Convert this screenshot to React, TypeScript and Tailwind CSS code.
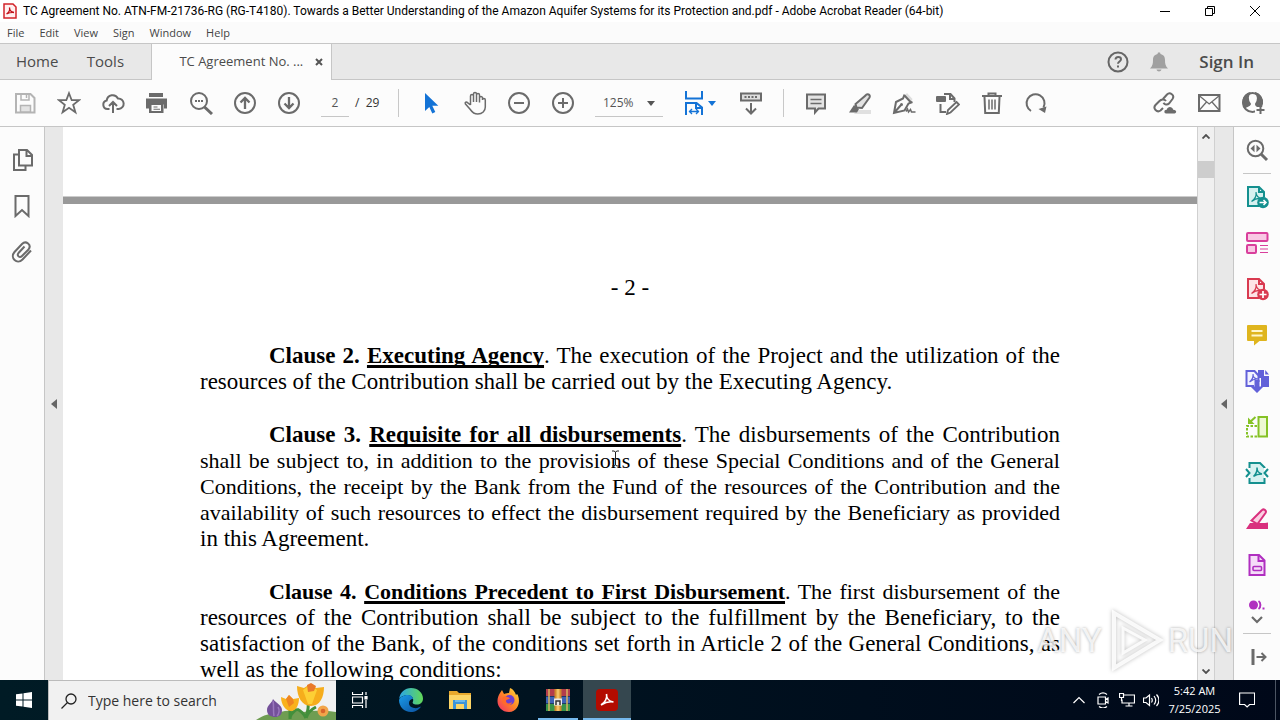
import type { ReactNode } from 'react';

type IconProps = { children: ReactNode; className?: string };

function Icon({ children, className = 'size-6' }: IconProps) {
  return (
    <svg
      viewBox="0 0 24 24"
      className={`shrink-0 ${className}`}
      fill="none"
      stroke="currentColor"
      strokeWidth="2"
      aria-hidden="true"
    >
      {children}
    </svg>
  );
}

function ToolButton({ label, children, className = 'w-11' }: { label: string; children: ReactNode; className?: string }) {
  return (
    <button type="button" aria-label={label} className={`flex h-10 shrink-0 items-center justify-center ${className}`}>
      {children}
    </button>
  );
}

const trefoil = 'M11 7c.6 4-1.600 7.500-4.500 9.500M11 7c0 3.500 2.500 6 6 6.500-4-.5-7.500.5-10.500 3';

const viewTools = [
  {
    label: 'Save',
    icon: (
      <g stroke="#b4b4b4">
        <path d="M3 3h14.500l4 4v14.500H3z" />
        <path d="M8 3v6h8V3M13.500 4v3" strokeWidth="1.500" />
        <path d="M7.500 21v-6.500h10V21z" strokeWidth="1.500" fill="#e3e3e3" />
      </g>
    ),
  },
  { label: 'Star', icon: <path d="M12 2.200l2.700 7h7.300l-5.800 4.600 2.200 7.400-6.400-4.400-6.400 4.400 2.200-7.400L2 9.200h7.300z" strokeWidth="1.800" /> },
  {
    label: 'Upload',
    icon: <path d="M8.500 18H6.500a4.300 4.300 0 01-.8-8.500A6 6 0 0117 7.500a5.200 5.200 0 01.8 10.500h-2.300M12 22V11.500M8 15l4-4 4 4" />,
  },
  {
    label: 'Print',
    icon: (
      <g stroke="none" fill="currentColor">
        <path d="M4 2h14v4H4zM1 7.500h21v10h-3v-4H4v4H1z" />
        <path d="M4 12.500h14.500v9.500H4z" />
        <path d="M6.500 14h9.500v6H6.500z" fill="#fcfcfc" />
        <path d="M8.500 15.500h4v1h-4zM8.500 17.700h6.500v1H8.500z" />
      </g>
    ),
  },
  {
    label: 'Find text',
    icon: (
      <>
        <circle cx="10" cy="10" r="8" />
        <path d="M15.500 16l7.500 7" strokeWidth="3" />
        <path d="M6 10h2M9 10h2M12 10h2" />
      </>
    ),
  },
  { label: 'Previous page', icon: <><circle cx="12" cy="12" r="10" /><path d="M12 18V7M7.500 11.500L12 7l4.500 4.500" strokeWidth="2.300" /></> },
  { label: 'Next page', icon: <><circle cx="12" cy="12" r="10" /><path d="M12 6v11M7.500 12.500L12 17l4.500-4.500" strokeWidth="2.300" /></> },
];

const pointerTools = [
  { label: 'Select', icon: <path d="M6 2v18l4.300-4 3 6.500 3-1.500-3-6.300h6z" fill="#1473d6" stroke="none" /> },
  {
    label: 'Pan',
    icon: (
      <path
        d="M7.500 14V5a1.500 1.500 0 013 0v6M10.500 5V3a1.500 1.500 0 013 0v8M13.500 4a1.500 1.500 0 013 0v7.500M16.500 6.500a1.600 1.600 0 013 0V9a1.300 1.300 0 012.800 0v7c0 4-3 7-7.500 7-3.500 0-5.500-1.500-7.500-4.500l-5-5.700c-.6-1.400 1-2.300 2.200-1.200L7.500 14"
        strokeWidth="1.500"
      />
    ),
  },
  { label: 'Zoom out', icon: <><circle cx="12" cy="12" r="10" /><path d="M7 12h10" /></> },
  { label: 'Zoom in', icon: <><circle cx="12" cy="12" r="10" /><path d="M7 12h10M12 7v10" /></> },
];

const editTools = [
  {
    label: 'Comment',
    icon: (
      <>
        <path d="M3 3.500h18v14h-6.500L11 21.500v-4H3z" fill="#e3e3e3" />
        <path d="M6.500 8.500h11M6.500 12.500h11" strokeWidth="1.500" />
      </>
    ),
  },
  {
    label: 'Highlight',
    icon: (
      <>
        <path d="M9 19h14v4H6z" fill="#e0e0e0" stroke="none" />
        <path d="M17.500 4.500c1.500-2.500 5.500-.8 4 2L14 17l-5.500-.5-1-3.500z" fill="#e3e3e3" />
        <path d="M6 14l5 4-2 3.500H1z" fill="currentColor" stroke="none" />
      </>
    ),
  },
  {
    label: 'Sign',
    icon: (
      <>
        <path d="M12.500 4.500L15 2l5.500 6-1.500 3.500z" fill="#dedede" stroke="none" />
        <path d="M12.500 3.500l-1.500 4-7 3.500L2 22l10.500-2.500 4-7 4-1.500M12.500 4.500l6.500 7M2 22l7-8" />
        <circle cx="9.500" cy="13.500" r="1.500" fill="currentColor" stroke="none" />
        <path d="M14 20.500l1.500-2.500 1 3 2-2.500 1 2.500h4" strokeWidth="1.500" />
      </>
    ),
  },
  {
    label: 'Edit form',
    icon: (
      <>
        <path d="M8 3h6.500l4 4.500V11M14 3v5h5M4.500 13v8H10" />
        <rect x="0" y="5" width="10" height="6" rx="1" fill="currentColor" stroke="none" />
        <path d="M20.500 11l2.500 2.500-8.500 8-3.500 1.500 1-4z" fill="#fcfcfc" strokeWidth="1.800" />
      </>
    ),
  },
  { label: 'Delete', icon: <><path d="M4.500 6l.7 16h13.600l.7-16M8.500 4V2.500h7V4" /><path d="M2 5h20" /><path d="M9 8.500v10M12 8.500v10M15 8.500v10" strokeWidth="1.500" /></> },
  { label: 'Rotate', icon: <><path d="M7 20a9 9 0 1112.500-3.500" /><path d="M22.500 15.500l-1.500 6.500-6.500-4z" fill="currentColor" stroke="none" /></> },
];

const shareTools = [
  {
    label: 'Share link',
    icon: (
      <>
        <path d="M10 8l4-4.500c3-3 8 .8 5.500 4.500L16 12.500c-2 2-4.500 1-5.500-.8M13 10c-2-2.500-5-1.500-6.500 0L2.500 14c-3 3.500 1.500 8 5 5.500L10 17" />
        <path d="M13 22.500c-2.500-.5-2-4 .7-3.800 1-3.700 5.500-3.700 6.500 0 3.300-.2 4 3.300 1.300 3.800z" fill="currentColor" stroke="none" />
      </>
    ),
  },
  { label: 'Email', icon: <><rect x="2" y="4" width="20.500" height="16" /><path d="M2 4.500l10.200 8.500L22.500 4.500M2 19.500l7.500-8.500M22.500 19.500L15 11" strokeWidth="1.300" /></> },
  {
    label: 'Invite',
    icon: (
      <>
        <circle cx="11.500" cy="11.500" r="9.500" />
        <path d="M2.500 9a9.500 9.500 0 017-7C6 4 6 9 9 13c-.5 2-4 2-5 3.500C2 14 2 12 2.500 9zM14 2c4 2 3.500 7.500 1 11 0 2 1.500 2 3 2.500l3-3A9.500 9.500 0 0014 2z" fill="currentColor" />
        <path d="M14 16h9v8h-9z" fill="#fcfcfc" stroke="none" />
        <path d="M19.500 15v8M15.500 19h8" />
      </>
    ),
  },
];

const sideTools = [
  {
    label: 'Export PDF',
    icon: (
      <g stroke="#14908f">
        <path d="M14 21H3V2h11l5 5v5M14 2v5h5" fill="#d6f1f0" />
        <path d={trefoil} strokeWidth="1.200" />
        <circle cx="18" cy="17.500" r="5.800" fill="#14908f" stroke="none" />
        <path d="M14.500 17.500h6M18.500 15l2.500 2.500-2.500 2.500" stroke="#fff" strokeWidth="1.500" />
      </g>
    ),
  },
  {
    label: 'Organize pages',
    icon: (
      <g stroke="#d93f9c">
        <rect x="2" y="2" width="20.500" height="8" rx="1" fill="#f9c8e4" />
        <rect x="2" y="14" width="9" height="8" rx="1" fill="#f9c8e4" />
        <path d="M15 14.500h8M15 18h8M15 21.500h8" strokeWidth="1.200" />
      </g>
    ),
  },
  {
    label: 'Create PDF',
    icon: (
      <g stroke="#d93a50">
        <path d="M14 21H3V2h11l5 5v5M14 2v5h5" fill="#fde3e6" />
        <path d={trefoil} strokeWidth="1.200" />
        <circle cx="18" cy="17.500" r="5.800" fill="#d93a50" stroke="none" />
        <path d="M14.500 17.500h7M18 14v7" stroke="#fff" strokeWidth="1.700" />
      </g>
    ),
  },
  {
    label: 'Comment tool',
    icon: (
      <>
        <path d="M3 2h18a1 1 0 011 1v14a1 1 0 01-1 1h-6.500L9 22.500V18H3a1 1 0 01-1-1V3a1 1 0 011-1z" fill="#dfb51e" stroke="none" />
        <path d="M6.500 8h11M6.500 12.500h11" stroke="#fff6c8" strokeWidth="1.800" />
      </>
    ),
  },
  {
    label: 'Combine files',
    icon: (
      <g stroke="#6261d9">
        <path d="M13 1h6v6h5v11h-8V9h-3z" fill="#6261d9" stroke="none" />
        <path d="M20.200 1l3.800 4.500h-3.800z" fill="#6261d9" stroke="none" />
        <path d="M9 17H1.500V2H9.500l4 4.500V13" fill="#f2f2ff" />
        <path d="M8 5c.4 3-1 6-3.500 8M8 5c0 3 2 5 5 5-3.500-.2-6 .8-8.500 3" strokeWidth="1.200" />
        <path d="M9.500 11h5v6.500h4L12 24l-6.500-6.500h4z" fill="#6261d9" stroke="none" />
      </g>
    ),
  },
  {
    label: 'Compare files',
    icon: (
      <g stroke="#85c226">
        <rect x="13.500" y="2" width="8.500" height="19.500" fill="#edf8d4" />
        <path d="M12 11H2v10.500h10" strokeDasharray="2.500 1.500" />
        <path d="M10.500 2L5 7" />
        <path d="M3 2.500V9h6.500z" fill="#85c226" stroke="none" />
      </g>
    ),
  },
  {
    label: 'Compress PDF',
    icon: (
      <g stroke="#14908f">
        <path d="M5 2.500h10l4 4V21H5z" fill="#d6f1f0" stroke="none" />
        <path d="M4.500 7V2H15l4.500 4.500V7M4.500 17v5h15v-5" />
        <path d="M1 8l3.500 4L1 16M23 8l-3.500 4 3.500 4" />
        <path d="M12 6.500c.4 4-1 6.500-3.500 9M12 6.500c0 4 2.500 6 5 6.500-3.500 0-6 .5-8.500 2.500" strokeWidth="1.500" />
      </g>
    ),
  },
  {
    label: 'Fill and sign',
    icon: (
      <g stroke="#d9307e">
        <path d="M1 22l4-6h15l3-.5V22z" fill="#d9307e" stroke="none" />
        <path d="M16.500 3.500c2-2.500 5.500 0 4 2.500L12.500 17l-6-3.500z" fill="#fbcfe2" />
      </g>
    ),
  },
  {
    label: 'Prepare form',
    icon: (
      <g stroke="#b02fc0">
        <path d="M4.500 2H14l5.500 5.500V22h-15z" fill="#f5dcf8" />
        <path d="M13.500 2v6h6" />
        <rect x="8" y="13.500" width="8.500" height="4" rx="1" strokeWidth="1.600" />
      </g>
    ),
  },
];

function WindowControl({ label, d }: { label: string; d: string }) {
  return (
    <button type="button" aria-label={label} className="flex h-5 w-[45px] items-center justify-center text-black">
      <svg viewBox="0 0 12 12" className="size-3" fill="none" stroke="currentColor" aria-hidden="true">
        <path d={d} />
      </svg>
    </button>
  );
}

function TitleBar() {
  return (
    <header className="flex h-[22px] shrink-0 items-center bg-white pr-[3px]">
      <svg viewBox="0 0 14 16" className="ml-[3px] h-4 w-3.5 shrink-0" aria-hidden="true">
        <path d="M1 1h9l3 3v11H1z" fill="#fff0f0" stroke="#d2232a" strokeWidth="1.500" />
        <path d="M6.500 4.500c.6 2.500-.8 5-3 6.500M6.500 4.500c0 2.500 1.500 4.500 4.500 5-3-.3-5 .3-7.500 1.500" fill="none" stroke="#c01018" strokeWidth="1.300" />
      </svg>
      <h1 className="ml-1.5 min-w-0 flex-1 truncate font-['Roboto',sans-serif] text-[12px] text-black">
        TC Agreement No. ATN-FM-21736-RG (RG-T4180). Towards a Better Understanding of the Amazon Aquifer Systems for its Protection and.pdf - Adobe Acrobat Reader (64-bit)
      </h1>
      <WindowControl label="Minimize" d="M1 6.500h10" />
      <WindowControl label="Restore" d="M1.500 3.500h7v7h-7zM3.500 3.500v-2h7v7h-2" />
      <WindowControl label="Close" d="M1 1l10 10M11 1L1 11" />
    </header>
  );
}

function MenuBar() {
  return (
    <nav className="flex h-[21px] shrink-0 items-center gap-[15px] bg-[#fbfbfb] px-[7px] pt-px text-[11px] text-[#444]">
      {['File', 'Edit', 'View', 'Sign', 'Window', 'Help'].map((item) => (
        <button key={item} type="button">{item}</button>
      ))}
    </nav>
  );
}

function TabBar() {
  return (
    <div className="flex h-[37px] shrink-0 items-stretch border-y border-[#c6c6c6] bg-[#e8e8e8] text-[#4b4b4b]">
      <button type="button" className="pr-[15px] pl-4 text-[15px]">Home</button>
      <button type="button" className="w-16 text-[15px]">Tools</button>
      <div className="-mb-px ml-3.5 flex w-[181px] items-center border-x border-[#c6c6c6] bg-[#fcfcfc] pl-[27px]">
        <button type="button" className="text-[13px] whitespace-nowrap">TC Agreement No. ...</button>
        <button type="button" aria-label="Close tab" className="mr-2 ml-auto">
          <svg viewBox="0 0 8 8" className="size-2" stroke="#555" strokeWidth="2" aria-hidden="true">
            <path d="M1 1l6 6M7 1L1 7" />
          </svg>
        </button>
      </div>
      <div className="ml-auto flex items-center pr-[26px]">
        <button type="button" aria-label="Help" className="text-[#666]">
          <Icon>
            <circle cx="12" cy="12" r="9.500" />
            <path d="M9.500 9.500c0-3.500 5.500-3 5.500-.2 0 2.200-3 2.200-3 4.500M12 15.500v2" />
          </Icon>
        </button>
        <button type="button" aria-label="Notifications" className="ml-[17px] text-[#a0a0a0]">
          <Icon>
            <path d="M11 2.500h2l.5 1.500c3.500 1 4.500 3 4.500 6 0 4 .5 6 3 8.500H3c2.500-2.500 3-4.500 3-8.500 0-3 1-5 4.500-6zM9.500 19.500h5c-.5 2.500-4.500 2.500-5 0z" fill="currentColor" stroke="none" />
          </Icon>
        </button>
        <button type="button" className="ml-[28px] text-[17px] font-semibold">Sign In</button>
      </div>
    </div>
  );
}

function Divider() {
  return <div className="h-7 w-px shrink-0 bg-[#c8c8c8]" />;
}

function ToolBar() {
  return (
    <div className="flex h-[47px] shrink-0 items-center border-b border-[#c6c6c6] bg-[#fcfcfc] pr-[5px] pl-[3px] text-[#6b6b6b]">
      {viewTools.map((t) => (
        <ToolButton key={t.label} label={t.label}><Icon>{t.icon}</Icon></ToolButton>
      ))}
      <input aria-label="Page number" defaultValue="2" className="ml-[10px] h-7 w-7 shrink-0 border-b border-[#c6c6c6] bg-transparent text-center text-[12px] text-[#555]" />
      <span className="w-[43px] shrink-0 pl-1.5 text-[12px] whitespace-pre text-[#333]">/  29</span>
      <div className="mr-[10px] ml-1.5"><Divider /></div>
      {pointerTools.map((t) => (
        <ToolButton key={t.label} label={t.label}><Icon>{t.icon}</Icon></ToolButton>
      ))}
      <div className="relative ml-[10px] w-[68px] shrink-0">
        <select aria-label="Zoom level" className="h-7 w-full appearance-none border-b border-[#c6c6c6] bg-transparent pl-2 text-[12px] text-[#555]">
          <option>125%</option>
        </select>
        <svg viewBox="0 0 8 5" className="pointer-events-none absolute top-3 right-2 h-[5px] w-2" fill="#555" aria-hidden="true"><path d="M0 0h8L4 5z" /></svg>
      </div>
      <ToolButton label="Page fit" className="ml-1.5 w-[60px] gap-0.5 text-[#1473d6]">
        <Icon>
          <path d="M4 0v7.500h16V0M4 24V12h10.500l5.500 4.500v7.500M14 12v5h6" />
          <path d="M7 20.500h10M10 18l-2.500 2.500L10 23M14 18l2.500 2.500L14 23" strokeWidth="1.300" />
        </Icon>
        <svg viewBox="0 0 8 5" className="h-[5px] w-2" fill="#1473d6" aria-hidden="true"><path d="M0 0h8L4 5z" /></svg>
      </ToolButton>
      <ToolButton label="Page display">
        <Icon>
          <rect x="2" y="2.500" width="20" height="7" fill="#ddd" />
          <path d="M5.500 6h2M9 6h2M12.500 6h2M16 6h2M12 12v10M7 17.500l5 5 5-5" />
        </Icon>
      </ToolButton>
      <div className="mx-[10px]"><Divider /></div>
      {editTools.map((t) => (
        <ToolButton key={t.label} label={t.label}><Icon>{t.icon}</Icon></ToolButton>
      ))}
      <div className="ml-auto flex">
        {shareTools.map((t) => (
          <ToolButton key={t.label} label={t.label}><Icon>{t.icon}</Icon></ToolButton>
        ))}
      </div>
    </div>
  );
}

function LeftRail() {
  return (
    <aside className="flex w-[45px] shrink-0 flex-col items-center gap-[22px] border-r border-[#c6c6c6] bg-[#fcfcfc] pt-[21px] text-[#6b6b6b]">
      <button type="button" aria-label="Page thumbnails">
        <Icon><path d="M9 2h8l5 5v10.500H9zM16.500 2v6h6M8 6.500H4v15.500h11.500v-4" /></Icon>
      </button>
      <button type="button" aria-label="Bookmarks">
        <Icon><path d="M5.500 2h13v20L12 16l-6.500 6z" /></Icon>
      </button>
      <button type="button" aria-label="Attachments">
        <Icon><path d="M21 10.500l-8.500 9c-5.500 5.500-13-1.500-8-7.500l7.500-8c4-4 10 1 6.500 5.500L12 16c-2.500 2.500-5.500-.5-3.500-3l6-6.500" /></Icon>
      </button>
    </aside>
  );
}

function Strip({ label }: { label: string }) {
  return (
    <div className="flex w-[18px] shrink-0 items-center justify-center bg-[#e8e8e8]">
      <button type="button" aria-label={label}>
        <svg viewBox="0 0 6 10" className="h-[10px] w-1.5" fill="#666" aria-hidden="true"><path d="M6 0v10L0 5z" /></svg>
      </button>
    </div>
  );
}

type Clause = { number: string; title: string; lines: { text: string; dense?: boolean }[] };

const clauses: Clause[] = [
  {
    number: '2.',
    title: 'Executing Agency',
    lines: [
      { text: '. The execution of the Project and the utilization of the' },
      { text: 'resources of the Contribution shall be carried out by the Executing Agency.' },
    ],
  },
  {
    number: '3.',
    title: 'Requisite for all disbursements',
    lines: [
      { text: '. The disbursements of the Contribution' },
      { text: 'shall be subject to, in addition to the provisions of these Special Conditions and of the General', dense: true },
      { text: 'Conditions, the receipt by the Bank from the Fund of the resources of the Contribution and the', dense: true },
      { text: 'availability of such resources to effect the disbursement required by the Beneficiary as provided', dense: true },
      { text: 'in this Agreement.' },
    ],
  },
  {
    number: '4.',
    title: 'Conditions Precedent to First Disbursement',
    lines: [
      { text: '. The first disbursement of the', dense: true },
      { text: 'resources of the Contribution shall be subject to the fulfillment by the Beneficiary, to the' },
      { text: 'satisfaction of the Bank, of the conditions set forth in Article 2 of the General Conditions, as' },
      { text: 'well as the following conditions:' },
    ],
  },
];

function ClauseText({ number, title, lines }: Clause) {
  return (
    <p>
      {lines.map((line, i) => (
        <span
          key={line.text}
          className={`block whitespace-nowrap ${i === 0 ? 'pl-[69px]' : ''} ${i < lines.length - 1 ? '[text-align-last:justify]' : ''} ${line.dense ? 'text-[22px]' : ''}`}
        >
          {i === 0 && (
            <strong>
              {`Clause ${number} `}
              <span className="underline decoration-[3px] underline-offset-2 [text-decoration-skip-ink:none]">{title}</span>
            </strong>
          )}
          {line.text}
        </span>
      ))}
    </p>
  );
}

function Document() {
  return (
    <main className="relative min-w-0 flex-1 overflow-hidden bg-white">
      <div className="h-[70px] border-b border-[#ccc]" />
      <div className="h-[7px] bg-[#999]" />
      <article className="px-[137px] pt-[71px] font-['Liberation_Serif',serif] text-[23px] leading-[26px] text-black">
        <p className="text-center">- 2 -</p>
        <div className="mt-[42px] flex flex-col gap-[27px]">
          {clauses.map((c) => (
            <ClauseText key={c.number} {...c} />
          ))}
        </div>
      </article>
      <svg viewBox="0 0 9 17" className="absolute top-[323px] left-[548px] h-[17px] w-[9px]" fill="none" stroke="#222" aria-hidden="true">
        <path d="M1 1h2l1.500 1L6 1h2M4.500 2v13M1 16h2l1.500-1L6 16h2" />
      </svg>
    </main>
  );
}

function ScrollBar() {
  return (
    <div className="flex w-[18px] shrink-0 flex-col items-center border-x border-[#d0d0d0] bg-[#f0f0f0] text-[#505050]">
      <button type="button" aria-label="Scroll up" className="flex h-[18px] items-center">
        <svg viewBox="0 0 8 5" className="h-[5px] w-2" fill="none" stroke="currentColor" strokeWidth="1.800" aria-hidden="true"><path d="M.5 4.500L4 1l3.500 3.500" /></svg>
      </button>
      <div className="mt-4 h-[17px] w-full bg-[#cdcdcd]" />
      <button type="button" aria-label="Scroll down" className="mt-auto flex h-[17px] items-center">
        <svg viewBox="0 0 8 5" className="h-[5px] w-2" fill="none" stroke="currentColor" strokeWidth="1.800" aria-hidden="true"><path d="M.5.500L4 4l3.500-3.500" /></svg>
      </button>
    </div>
  );
}

function RightRail() {
  return (
    <aside className="flex w-[47px] shrink-0 flex-col items-center border-l border-[#c6c6c6] bg-[#fcfcfc] text-[#6b6b6b]">
      <button type="button" aria-label="Search tools" className="flex h-[46px] items-center">
        <Icon>
          <circle cx="10.500" cy="10.500" r="7.800" />
          <path d="M16 16l6 6" strokeWidth="3" />
          <path d="M9.500 6.800v7.400L5.500 10.500zM11.500 6.800v7.400l4-3.700z" fill="currentColor" stroke="none" />
        </Icon>
      </button>
      <div className="h-px w-7 bg-[#c6c6c6]" />
      <div className="flex flex-col">
        {sideTools.map((t) => (
          <button key={t.label} type="button" aria-label={t.label} className="flex h-[46px] items-center"><Icon>{t.icon}</Icon></button>
        ))}
      </div>
      <button type="button" aria-label="Redact" className="mt-3">
        <svg viewBox="0 0 18 10" className="h-[10px] w-[18px]" aria-hidden="true">
          <circle cx="5.500" cy="5" r="4.500" fill="#b02fc0" />
          <path d="M10.500 1c2.500 1.500 2.500 6.500 0 8" fill="none" stroke="#b02fc0" strokeWidth="2" />
          <path d="M14.500 7.500h2v2h-2z" fill="#b02fc0" />
        </svg>
      </button>
      <button type="button" aria-label="More tools" className="mt-1.5">
        <svg viewBox="0 0 12 8" className="h-2 w-3" fill="none" stroke="currentColor" strokeWidth="2.200" aria-hidden="true"><path d="M1 1l5 5 5-5" /></svg>
      </button>
      <div className="mt-auto h-px w-7 bg-[#c6c6c6]" />
      <button type="button" aria-label="Collapse pane" className="flex h-[46px] items-center pl-1">
        <svg viewBox="0 0 16 16" className="size-4" fill="none" stroke="currentColor" strokeWidth="2" aria-hidden="true">
          <path d="M2 0v16" strokeWidth="3" /><path d="M5.500 8H14M10.500 4l4 4-4 4" />
        </svg>
      </button>
    </aside>
  );
}

function TaskButton({ label, children, className = '' }: { label: string; children: ReactNode; className?: string }) {
  return (
    <button type="button" aria-label={label} className={`flex h-full w-12 shrink-0 items-center justify-center ${className}`}>
      {children}
    </button>
  );
}

function Tulips() {
  return (
    <svg viewBox="0 0 80 38" className="absolute right-0 bottom-0 h-[38px] w-20" aria-hidden="true">
      <path d="M0 38c8-5 14-7 22-7 8-3 18-3 26-1 12-2 24-1 32 0v8z" fill="#6f9d52" />
      <g transform="translate(3 0)">
        <path d="M14 17c-1 4-6 6-6 11 0 5 4 7 8 7s7-2 7-7-6-7-9-11z" fill="#74519a" />
        <path d="M14 19c1 4 0 10 1 15M19 25c2 3 1 7-1 9" stroke="#9a78bd" strokeWidth="1.500" fill="none" />
      </g>
      <path d="M34 25v12M34 37c0-5 4-8 7-10M52 22c1 4-1 9-2 14M50 36c-3-6-7-8-9-9M50 36c2-6 6-9 10-11" stroke="#438f3b" strokeWidth="3" fill="none" />
      <path d="M25 15l5 2 3-4 4 4 6-1c0 7-3 13-8 13s-10-6-10-14z" fill="#f9b11c" />
      <path d="M30 17l3-4 4 4 1 4-5 4z" fill="#ee8422" />
      <path d="M41 4l7 2 6-4 6 4 8-1c0 10-4 19-13 19S41 15 41 4z" fill="#f6ad1c" />
      <path d="M47 8l7-5 7 5-5 14h-4z" fill="#fdcf35" />
      <path d="M51 3l4-2 5 3-2 5-6 1z" fill="#e9792a" />
      <circle cx="67" cy="29" r="5.500" fill="#f2a54a" />
      <circle cx="67" cy="29" r="2.300" fill="#d9652b" />
    </svg>
  );
}

function TaskBar() {
  return (
    <footer className="flex h-10 shrink-0 items-center bg-linear-to-r from-[#001b25] to-[#000819] text-white">
      <TaskButton label="Start">
        <svg viewBox="0 0 16 16" className="size-4" fill="#fff" aria-hidden="true"><path d="M0 2.300L6.500 1.400v6.100H0zM7.500 1.200L16 0v7.500H7.500zM0 8.500h6.500v6.100L0 13.700zM7.500 8.500H16V16l-8.500-1.200z" /></svg>
      </TaskButton>
      <label className="relative flex h-full w-72 shrink-0 items-center border-t border-l border-[#bbb] bg-[#f1f1f1] pl-3 text-[#222]">
        <svg viewBox="0 0 16 16" className="size-4" fill="none" stroke="currentColor" strokeWidth="1.300" aria-hidden="true"><circle cx="10" cy="6" r="5" /><path d="M6.500 9.500L.5 15.500" /></svg>
        <Tulips />
        <input type="text" placeholder="Type here to search" aria-label="Type here to search" className="ml-[11px] w-40 bg-transparent text-[14px] placeholder:text-[#333]" />
      </label>
      <TaskButton label="Task view">
        <svg viewBox="0 0 16 16" className="size-4" fill="none" stroke="#fff" strokeWidth="1.200" aria-hidden="true"><path d="M0.500 0v2.500h10V0M.5 5h10v6H.5zM.5 16v-2.500h10V16M14 0v3M14 8v8" /><path d="M13 4.500h2v2.500h-2z" fill="#fff" /></svg>
      </TaskButton>
      <div className="ml-[3px] flex h-full gap-px">
        <TaskButton label="Edge">
          <svg viewBox="0 0 24 24" className="size-6" aria-hidden="true">
            <defs>
              <linearGradient id="edgeTop" x1="0" x2="1"><stop offset="0" stopColor="#2aa5e8" /><stop offset="1" stopColor="#62d957" /></linearGradient>
              <linearGradient id="edgeLow" x1="0" x2="1" y2="1"><stop offset="0" stopColor="#1a9be8" /><stop offset="1" stopColor="#0b4f9e" /></linearGradient>
            </defs>
            <path d="M.2 11C1 4 6 0 12 0c7 0 12 5 12 10.500 0 4-3 6-6 6-4 0-5-1.500-4-3C15 11 13 7 9 7 5 7 1.500 9 .2 11z" fill="url(#edgeTop)" />
            <path d="M0 12c1-3 5-5 9-5 3 0 5 2 5 4-5 0-6 8 1 9 3 .5 5-.5 7-1.500C20 22 16 24 12 24 5 24 0 18.500 0 12z" fill="url(#edgeLow)" />
          </svg>
        </TaskButton>
        <TaskButton label="File Explorer">
          <svg viewBox="0 0 22 20" className="h-5 w-[22px]" aria-hidden="true"><path d="M0 1h8l2 2h12v16H0z" fill="#e8a92d" /><path d="M0 5h22v14H0z" fill="#fcd566" /><path d="M4 10h14v9h-3v-5H7v5H4z" fill="#3d94d8" /><path d="M6 10h10v2H6z" fill="#6bb9ec" /></svg>
        </TaskButton>
        <TaskButton label="Firefox">
          <svg viewBox="0 0 24 24" className="size-6" aria-hidden="true">
            <defs><linearGradient id="fox" x1="1" x2="0" y2="1"><stop offset="0" stopColor="#ffe03d" /><stop offset=".5" stopColor="#ff8426" /><stop offset="1" stopColor="#f0286c" /></linearGradient></defs>
            <path d="M3 5l2-3 2 4c2-1 4-1 5-1l1-5c3 1 5 4 6 7l1-1c3 3 4 17-8 18C5 24 .5 19 .5 13 .5 10 1.500 7 3 5z" fill="url(#fox)" />
            <circle cx="12.500" cy="12" r="5" fill="#6c3fd1" />
            <path d="M5 10c3-3 5-1 8 0-1 2-4 1-4 3 0 3 4 3 6 1-1 5-9 5-10-1z" fill="#ff6a2c" />
          </svg>
        </TaskButton>
        <TaskButton label="WinRAR" className="relative">
          <svg viewBox="0 0 24 22" className="h-[22px] w-6" aria-hidden="true">
            <path d="M0 0h24v7H0z" fill="#b33d4c" /><path d="M0 7.500h24v7H0z" fill="#3d62b5" /><path d="M0 15h24v7H0z" fill="#37934a" />
            <path d="M3 0v22M21 0v22" stroke="#d9b560" strokeWidth="1.500" />
            <path d="M8.500 0h7v22h-7z" fill="#d18a2d" /><path d="M10.500 0h3v22h-3z" fill="#f2c165" />
            <path d="M8 9.500h8v7H8z" fill="#e8e8e8" /><path d="M10 16v-4h4v4" fill="none" stroke="#333" strokeWidth="1.500" />
          </svg>
          <span className="absolute inset-x-1 bottom-0 h-0.5 bg-[#76b9ed]" />
        </TaskButton>
        <TaskButton label="Acrobat Reader" className="relative bg-[#35474f]">
          <svg viewBox="0 0 22 22" className="size-[22px]" aria-hidden="true">
            <rect width="22" height="22" rx="4" fill="#b30b00" />
            <path d="M10.500 5c1 4-1.500 8.500-5.500 11M10.500 5c-.2 4.500 3 7.500 7 8-4.500-.8-8.500.5-12.500 3" fill="none" stroke="#fff" strokeWidth="1.600" />
          </svg>
          <span className="absolute inset-x-0 bottom-0 h-0.5 bg-[#76b9ed]" />
        </TaskButton>
      </div>
      <div className="ml-auto flex h-full items-center">
        {[
          { label: 'Show hidden icons', d: 'M2.500 11L8 5.500l5.500 5.500' },
          { label: 'Meet now', d: 'M3 5h7.500v7H3zM10.500 7.500l2.500-1.500v5l-2.500-1.500M4 2.500c2.500-2 5.500-2 8 0M4 14.500c2.500 2 5.500 2 8 0' },
          { label: 'Network', d: 'M5 3h10.500v8H3V7.500M10 11v3M6.500 14h7M.5 1.500h4v4h-4zM2.500 5.500V9' },
          { label: 'Volume', d: 'M.5 6h2.500l3.500-3v10.500L3 10.500H.5zM8.500 6c1 1.500 1 3 0 4.500M11 4c2 2.500 2 6 0 8.500M13.500 2.500c3 3.500 3 8 0 11.500' },
        ].map((t) => (
          <button key={t.label} type="button" aria-label={t.label} className="flex h-full w-6 items-center justify-center">
            <svg viewBox="0 0 16 16" className="size-4" fill="none" stroke="#fff" strokeWidth="1.200" aria-hidden="true"><path d={t.d} /></svg>
          </button>
        ))}
        <button type="button" className="w-[63px] text-center text-[11px] leading-[18px]">
          5:42 AM<br />7/25/2025
        </button>
        <button type="button" aria-label="Notification center" className="mr-1 flex h-full w-[50px] items-center justify-center border-r border-[#4c5563] pr-2">
          <svg viewBox="0 0 16 16" className="size-4" fill="none" stroke="#fff" strokeWidth="1.200" aria-hidden="true"><path d="M.6 1h15v11.500h-5l-2.500 2.500-2.500-2.500h-5z" /></svg>
        </button>
      </div>
    </footer>
  );
}

function Watermark() {
  return (
    <div className="pointer-events-none absolute right-[47px] bottom-[47px] flex h-16 items-center gap-1 font-['Roboto',sans-serif] text-[33px] text-white/80 [text-shadow:0_0_3px_rgb(0_0_0/0.35)]">
      <span>ANY</span>
      <svg viewBox="0 0 58 64" className="h-16 w-[58px] drop-shadow-[0_0_2px_rgba(0,0,0,0.3)]" fill="none" stroke="#fff" strokeOpacity=".85" strokeWidth="4" aria-hidden="true">
        <path d="M8 4l46 27-46 28z" />
        <path d="M17 19l22 12-22 13z" strokeWidth="3" />
      </svg>
      <span>RUN</span>
    </div>
  );
}

export default function App() {
  return (
    <div className="relative flex h-screen flex-col overflow-hidden bg-white font-['Open_Sans','Noto_Sans',sans-serif]">
      <TitleBar />
      <MenuBar />
      <TabBar />
      <ToolBar />
      <div className="flex min-h-0 flex-1">
        <LeftRail />
        <Strip label="Show navigation pane" />
        <Document />
        <ScrollBar />
        <Strip label="Show tools pane" />
        <RightRail />
      </div>
      <TaskBar />
      <Watermark />
    </div>
  );
}
